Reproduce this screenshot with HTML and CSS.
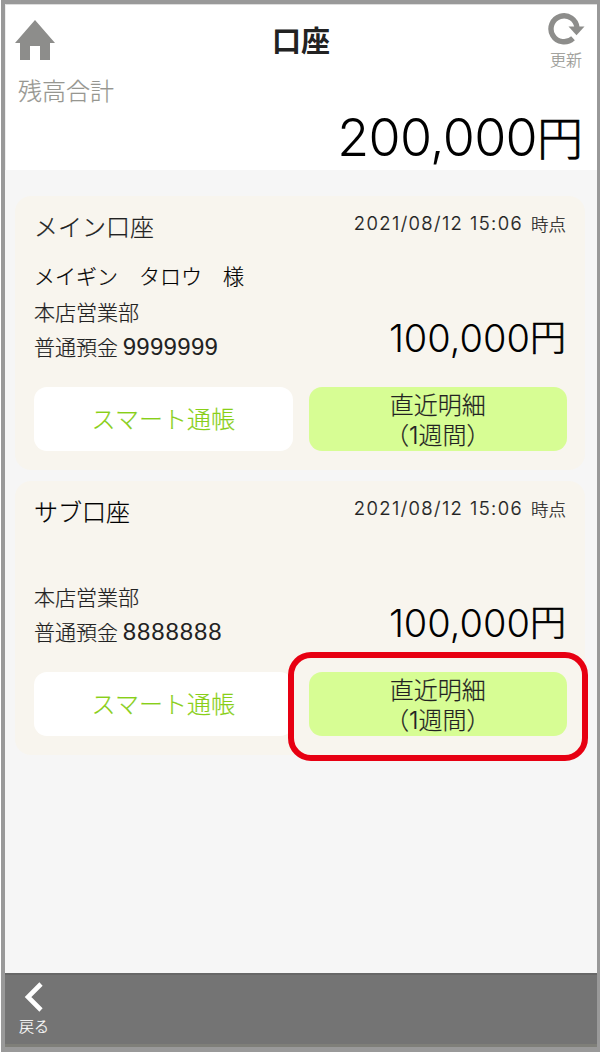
FILE: index.html
```
<!DOCTYPE html>
<html lang="ja">
<head>
<meta charset="utf-8">
<title>口座</title>
<link rel="stylesheet" href="styles.css">
</head>
<body>
<div class="screen">
  <header class="top">
    <div class="bar">
      <svg class="home" width="40" height="40" viewBox="0 0 40 40"><path d="M20 0 40 23H35V40H25V26H15V40H5V23H0Z" fill="#8d8d8b"/></svg>
      <h1 class="title">口座</h1>
      <div class="refresh">
        <svg width="37" height="34" viewBox="0 0 37 34"><path d="M25 27.2A13 13 0 1 1 29 17" fill="none" stroke="#8d8d8b" stroke-width="5.4"/><path d="M20.5 15.5H36.5L28.5 24.3Z" fill="#8d8d8b"/></svg>
        <span class="refresh-label">更新</span>
      </div>
    </div>
    <div class="total-label">残高合計</div>
    <div class="total"><span class="total-num">200,000</span><span class="yen">円</span></div>
  </header>
  <main class="accounts">
    <section class="card">
      <div class="card-head"><h2 class="name">メイン口座</h2><div class="date"><span class="stamp">2021/08/12 15:06</span><span>時点</span></div></div>
      <div class="detail">
        <div class="info">
          <p class="holder">メイギン　タロウ　様</p>
          <p class="branch">本店営業部</p>
          <p class="branch">普通預金 <span class="number">9999999</span></p>
        </div>
        <div class="amount"><span class="amount-num">100,000</span><span class="yen">円</span></div>
      </div>
      <div class="buttons"><div class="button passbook">スマート通帳</div><div class="button recent"><p>直近明細<br>（1週間）</p></div></div>
    </section>
    <section class="card second">
      <div class="card-head"><h2 class="name">サブ口座</h2><div class="date"><span class="stamp">2021/08/12 15:06</span><span>時点</span></div></div>
      <div class="detail">
        <div class="info">
          <p class="holder"></p>
          <p class="branch">本店営業部</p>
          <p class="branch">普通預金 <span class="number eights">8888888</span></p>
        </div>
        <div class="amount"><span class="amount-num">100,000</span><span class="yen">円</span></div>
      </div>
      <div class="buttons"><div class="button passbook">スマート通帳</div><div class="button recent marked"><p>直近明細<br>（1週間）</p></div></div>
    </section>
  </main>
  <footer class="footer">
    <div class="back">
      <svg width="20" height="30" viewBox="0 0 20 30"><path d="M17 2 4 15 17 28" fill="none" stroke="#fff" stroke-width="4.6"/></svg>
      <span>戻る</span>
    </div>
  </footer>
</div>
</body>
</html>
```
FILE: styles.css
```
* { box-sizing: border-box; }
body { margin: 0; background: #fff; font-family: "Noto Sans CJK JP", sans-serif; font-weight: 300; color: #222; -webkit-text-stroke: 0.2px; }
h1, h2, p { margin: 0; font-weight: inherit; }
svg { display: block; }
.screen { display: flex; flex-direction: column; height: 1052px; margin-left: 1px; border: 4px solid #999; border-right-width: 3px; border-bottom-width: 5px; background: #f6f6f6; }
.top { height: 166px; background: #fff; border-top: 1px solid #ddd; border-left: 1px solid #eee; }
.bar { display: flex; justify-content: space-between; height: 68px; padding: 0 12px 0 9px; }
.home { margin-top: 15px; }
.title { width: 60px; margin: 12px 0 0 1px; font-size: 29px; line-height: 44px; font-weight: 700; white-space: nowrap; -webkit-text-stroke: 0; }
.refresh { width: 37px; padding-top: 6px; }
.refresh-label { display: block; padding-top: 3px; padding-left: 2px; font-size: 16px; line-height: 22px; color: #999994; white-space: nowrap; }
.total-label { padding-left: 12px; font-size: 24px; line-height: 34px; color: #969690; }
.total { display: flex; justify-content: flex-end; align-items: baseline; margin-top: -2px; padding-right: 14px; color: #000; font-size: 46px; line-height: 62px; }
.total-num { font-family: Inter, sans-serif; font-size: 52px; letter-spacing: -0.7px; -webkit-text-stroke: 0; }
.yen { position: relative; top: -1px; -webkit-text-stroke: 0.7px; }
.accounts { flex: 1; padding: 26px 12px 0 10px; }
.card { height: 274px; margin-bottom: 11px; padding: 0 18px 0 19px; border-radius: 16px; background: #f8f5ee; }
.card-head { display: flex; justify-content: space-between; height: 60px; padding: 11px 1px 0 0; }
.name { font-size: 24px; line-height: 38px; }
.second .name { color: #000; }
.date { display: flex; gap: 8px; font-size: 17.5px; line-height: 33px; }
.stamp { font-family: Inter, sans-serif; font-size: 18.5px; letter-spacing: 1.4px; }
.detail { display: flex; justify-content: space-between; height: 131px; padding-right: 1px; }
.holder { height: 38px; font-size: 21px; line-height: 38px; color: #000; }
.branch { font-size: 21px; line-height: 35px; white-space: nowrap; }
.number { font-family: "Liberation Sans", sans-serif; font-size: 24px; line-height: 1; letter-spacing: 0.3px; -webkit-text-stroke: 0; }
.eights { letter-spacing: 0.9px; }
.amount { display: flex; align-items: baseline; padding-top: 54px; font-size: 36px; line-height: 52px; color: #000; }
.amount-num { font-family: Inter, sans-serif; font-size: 38px; -webkit-text-stroke: 0; }
.buttons { display: grid; grid-template-columns: 1fr 1fr; gap: 16px; height: 64px; }
.button { position: relative; display: flex; align-items: center; justify-content: center; border-radius: 13px; font-size: 24px; line-height: 30px; text-align: center; }
.passbook { padding-bottom: 2px; background: #fff; color: #89cf18; }
.recent { padding-top: 4px; background: #d7fd94; color: #222; font-family: Inter, "Noto Sans CJK JP", sans-serif; }
.marked::after { content: ""; position: absolute; inset: -20px -21px -25px -21px; border: 6px solid #e70012; border-radius: 23px; }
.footer { height: 74px; background: #747474; border-top: 2px solid #676767; border-bottom: 3px solid #7f7f79; }
.back { display: flex; flex-direction: column; width: 50px; padding: 7px 0 0 14px; color: #fff; font-size: 15px; line-height: 28px; white-space: nowrap; }
.back svg { margin-left: 5px; }
```
